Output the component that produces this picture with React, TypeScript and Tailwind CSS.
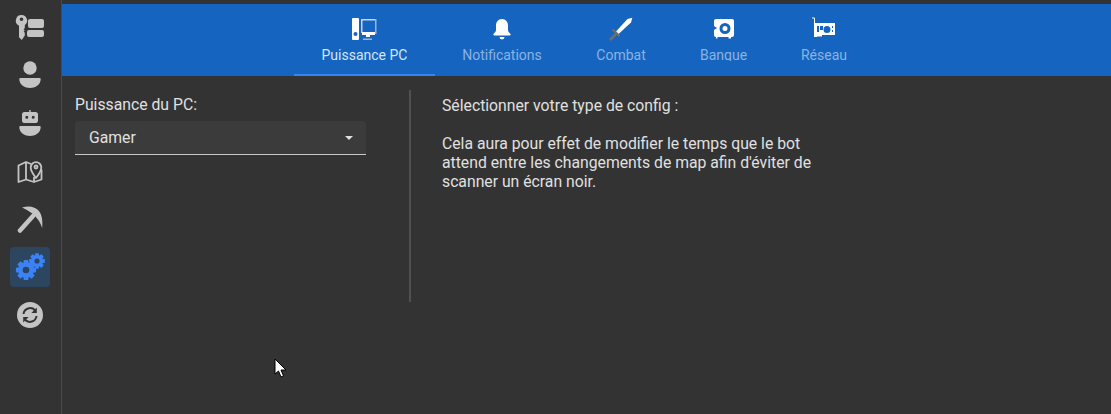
import type { ReactNode } from "react";

function NavItem({ active, children }: { active?: boolean; children: ReactNode }) {
  return (
    <div
      className={`w-10 h-10 flex items-center justify-center rounded ${active ? "bg-[#2c4660]" : ""}`}
    >
      {children}
    </div>
  );
}

function Gear({ cx, cy, r, color }: { cx: number; cy: number; r: number; color: string }) {
  const teeth = [0, 45, 90, 135, 180, 225, 270, 315];
  return (
    <g>
      {teeth.map((a) => (
        <rect
          key={a}
          x={cx - r * 0.27}
          y={cy - r * 1.12}
          width={r * 0.54}
          height={r * 0.6}
          rx={r * 0.1}
          fill={color}
          transform={`rotate(${a} ${cx} ${cy})`}
        />
      ))}
      <circle cx={cx} cy={cy} r={r * 0.62} fill="none" stroke={color} strokeWidth={r * 0.5} />
    </g>
  );
}

function Sidebar() {
  const c = "#c4c4c4";
  return (
    <div className="w-[60px] pr-px shrink-0 flex flex-col items-center gap-2 pt-[7px] border-r border-[#4a4a4a] box-content">
      <NavItem>
        <svg width="30" height="28" viewBox="0 0 30 28">
          <path
            fill={c}
            fillRule="evenodd"
            d="M6.500 2a5.700 5.700 0 0 1 3.300 10.300V15l-1.200 1.200 1.200 1.200-1.200 1.200 1.200 1.200v2.600L6.800 27 4 24.200V12.800A5.700 5.700 0 0 1 6.500 2zm0 2.500a1.800 1.800 0 1 0 0 3.600 1.800 1.800 0 0 0 0-3.600z"
          />
          <rect x="13" y="6" width="16" height="9" rx="2" fill={c} />
          <rect x="12" y="17" width="17" height="7" rx="2" fill={c} />
        </svg>
      </NavItem>
      <NavItem>
        <svg width="24" height="28" viewBox="0 0 24 28">
          <circle cx="12" cy="7" r="6.700" fill={c} />
          <path fill={c} d="M1.300 18Q1.300 17 2.300 17H21.700Q22.700 17 22.700 18C22.700 24 17 27 12 27S1.300 24 1.300 18z" />
        </svg>
      </NavItem>
      <NavItem>
        <svg width="24" height="28" viewBox="0 0 24 28">
          <path
            fill={c}
            fillRule="evenodd"
            d="M11.300 1h1.400v2H17.500a2.500 2.500 0 0 1 2.500 2.500v6a2.500 2.500 0 0 1-2.500 2.500h-11A2.500 2.500 0 0 1 4 11.500v-6A2.500 2.500 0 0 1 6.500 3h4.800zM8.800 6.800a1.500 1.500 0 1 0 0 3 1.500 1.500 0 0 0 0-3zm6.400 0a1.500 1.500 0 1 0 0 3 1.500 1.500 0 0 0 0-3z"
          />
          <path fill={c} d="M1.300 18Q1.300 17 2.300 17H21.700Q22.700 17 22.700 18C22.700 24 17 27 12 27S1.300 24 1.300 18z" />
        </svg>
      </NavItem>
      <NavItem>
        <svg width="26" height="28" viewBox="0 0 26 28" fill="none" stroke={c} strokeWidth="1.800">
          <path d="M14 7 9 5 1.500 8.500V25L9 22.500 17 25 24.500 22.500V12.500M9 5V22.500M17 20V25" strokeLinejoin="round" />
          <path d="M19 21c-3.500-4.500-5.300-7.500-5.300-10.500a5.300 5.300 0 0 1 10.600 0c0 3-1.800 6-5.300 10.500z" strokeLinejoin="round" />
          <circle cx="19" cy="10" r="1.500" />
        </svg>
      </NavItem>
      <NavItem>
        <svg width="28" height="28" viewBox="0 0 28 28">
          <path d="M4 25.500 17 11" stroke={c} strokeWidth="4.500" strokeLinecap="round" fill="none" />
          <path fill={c} d="M6 2.500C13 .5 18 1.500 22 5c3.500 3.500 5 9 4.200 18C24 16 20 11.500 15.500 8 12.500 5.800 9.500 4 6 2.500z" />
        </svg>
      </NavItem>
      <NavItem active>
        <svg width="30" height="28" viewBox="0 0 30 28">
          <Gear cx={11} cy={17} r={9} color="#3b82f6" />
          <Gear cx={22} cy={8} r={7} color="#3b82f6" />
        </svg>
      </NavItem>
      <NavItem>
        <svg width="26" height="26" viewBox="0 0 26 26">
          <circle cx="13" cy="13" r="13" fill={c} />
          <path
            d="M6.500 12a6.700 6.700 0 0 1 11.500-3.800M19.500 14a6.700 6.700 0 0 1-11.500 3.800"
            fill="none"
            stroke="#333"
            strokeWidth="2"
          />
          <path d="M19.800 5.500v5.500h-5.500zM6.200 20.500V15h5.500z" fill="#333" />
        </svg>
      </NavItem>
    </div>
  );
}

function PcIcon() {
  return (
    <svg width="26" height="24" viewBox="0 0 26 24">
      <path
        fill="#fff"
        fillRule="evenodd"
        d="M1 1h5a1 1 0 0 1 1 1v20a1 1 0 0 1-1 1H1a1 1 0 0 1-1-1V2a1 1 0 0 1 1-1zm2.500 14a2 2 0 1 0 0 4 2 2 0 0 0 0-4z"
      />
      <path fill="#c9d6e6" d="M9 2h14v1.500H10.500V16H9z" />
      <path fill="#fff" d="M10 15h13v3H18v2h-4v-2h-4z" />
      <path fill="#9db4d0" d="M23 2h1.500v15H23zM11 21.500h9V23h-9z" />
    </svg>
  );
}

function BellIcon() {
  return (
    <svg width="18" height="21" viewBox="0 0 18 21">
      <path
        fill="#fff"
        d="M9 0c3.800 0 6 3 6 6.500V11c0 1.500 1 2.500 2.300 3.800.7.700.3 1.700-.6 1.700H1.300c-.9 0-1.300-1-.6-1.700C2 13.500 3 12.500 3 11V6.500C3 3 5.200 0 9 0z"
      />
      <path fill="#fff" d="M6.500 18h5a2.500 2.500 0 0 1-5 0z" />
    </svg>
  );
}

function SwordIcon() {
  return (
    <svg width="24" height="24" viewBox="0 0 24 24">
      <path fill="#fff" d="M23.300.7 22 5.500 9.500 17 7 14.500 18.500 2z" />
      <path stroke="#6f6f6f" strokeWidth="2" d="M3.500 12.500 10.500 19" fill="none" />
      <path stroke="#6f6f6f" strokeWidth="2.500" d="M1 23l6-6" fill="none" />
    </svg>
  );
}

function SafeIcon() {
  return (
    <svg width="22" height="22" viewBox="0 0 22 22">
      <path
        fill="#fff"
        fillRule="evenodd"
        d="M3 1h16a2 2 0 0 1 2 2v14a2 2 0 0 1-2 2h-1v1.500h-2.500V19h-11v1.500H3V19a2 2 0 0 1-2-2v-5l3-2-3-2V3a2 2 0 0 1 2-2zm9 4a5.500 5.500 0 1 0 0 11 5.500 5.500 0 0 0 0-11z"
      />
      <path fill="#fff" d="M12 8a2.500 2.500 0 1 1 0 5 2.500 2.500 0 0 1 0-5z" />
    </svg>
  );
}

function CardIcon() {
  return (
    <svg width="24" height="24" viewBox="0 0 24 24">
      <path fill="none" stroke="#fff" strokeWidth="1" d="M0 1h2.500v19" />
      <path
        fill="#fff"
        fillRule="evenodd"
        d="M3 6h20v12H10v1.500H5V20H3zm2 3v6h2V9zm3 0v4h3V9zm7 0a3.500 3.500 0 1 0 0 7 3.500 3.500 0 0 0 0-7zm5 0v2h1V9zm0 4v2h1v-2z"
      />
    </svg>
  );
}

const tabs: { label: string; icon: ReactNode; width: string; active?: boolean }[] = [
  { label: "Puissance PC", icon: <PcIcon />, width: "w-[141px]", active: true },
  { label: "Notifications", icon: <BellIcon />, width: "w-[134px]" },
  { label: "Combat", icon: <SwordIcon />, width: "w-[104px]" },
  { label: "Banque", icon: <SafeIcon />, width: "w-[101px]" },
  { label: "Réseau", icon: <CardIcon />, width: "w-[100px]" },
];

function TabBar() {
  return (
    <div className="h-[72px] mt-1 bg-[#1565c0] flex justify-center">
      <div className="flex ml-[-5px]">
        {tabs.map((tab) => (
          <div
            key={tab.label}
            className={`relative flex flex-col items-center pt-[13px] ${tab.width} ${tab.active ? "text-[#d6e4f5]" : "text-[#8ab2e2]"}`}
          >
            <div className="h-6 flex items-center justify-center">{tab.icon}</div>
            {/* labels are clipped just under the baseline in the reference */}
            <div className="mt-1 h-4 overflow-hidden text-sm leading-5 whitespace-nowrap">{tab.label}</div>
            {tab.active && (
              <div className="absolute left-0 right-0 bottom-0 h-0.5 bg-[#3b82f6]" />
            )}
          </div>
        ))}
      </div>
    </div>
  );
}

export default function App() {
  return (
    <div className="relative w-[1111px] h-[414px] overflow-hidden flex bg-[#333333] text-[#e0e0e0] font-['Roboto',sans-serif] text-[15.75px]">
      <Sidebar />
      <div className="flex-1 flex flex-col">
        <TabBar />
        <div className="flex pl-[13px] pt-[14px]">
          <div className="w-[291px]">
            <div className="leading-5 pt-[5px]">Puissance du PC:</div>
            <div className="mt-[6px] h-[34px] bg-[#3b3b3b] border-b border-[#c8c8c8] flex items-center justify-between pl-[14px] pr-[13px] rounded-t-sm">
              <span className="leading-5">Gamer</span>
              <span className="w-0 h-0 border-l-[4.5px] border-r-[4.5px] border-t-[4px] border-l-transparent border-r-transparent border-t-[#e0e0e0]" />
            </div>
          </div>
          <div className="ml-[43px] w-0.5 h-[212px] bg-[#505050]" />
          <div className="ml-[31px] w-[420px] pt-[6px] leading-[19px] whitespace-nowrap">
            <p>Sélectionner votre type de config :</p>
            <p className="mt-[19px]">
              Cela aura pour effet de modifier le temps que le bot
              <br />
              attend entre les changements de map afin d'éviter de
              <br />
              scanner un écran noir.
            </p>
          </div>
        </div>
      </div>
      <svg className="absolute left-[274px] top-[358px]" width="14" height="20" viewBox="0 0 14 20">
        <path d="M1 1v15l3.500-3 2.500 6 2.500-1-2.500-6H12z" fill="#fff" stroke="#000" strokeWidth="1" />
      </svg>
    </div>
  );
}
